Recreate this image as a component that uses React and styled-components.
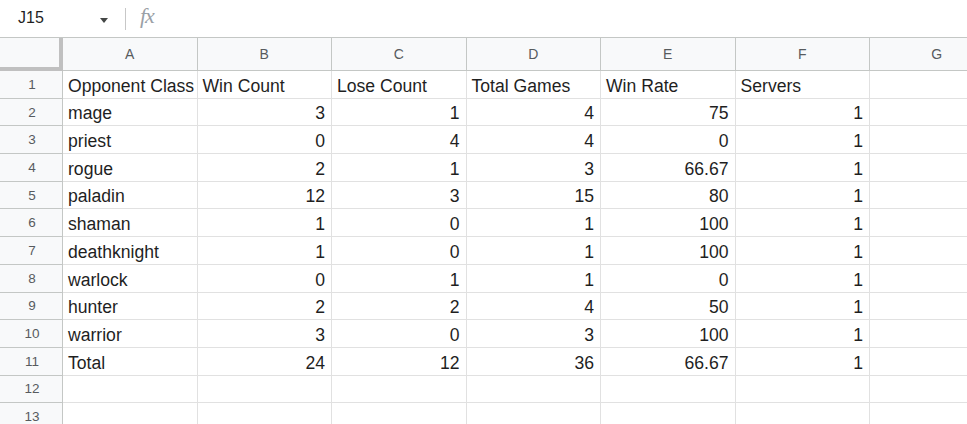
import React from "react";
import styled, { createGlobalStyle } from "styled-components";

const GlobalStyle = createGlobalStyle`
    html, body {
        margin: 0;
        padding: 0;
        background: #fff;
        overflow: hidden;
    }
    body {
        font-family: "Liberation Sans", Arial, sans-serif;
    }
`;

const COL_W = 134.5;
const ROW_H = 27.7;
const HEAD_W = 63;

const Sheet = styled.div`
    width: 967px;
    height: 424px;
    overflow: hidden;
    background: #fff;
`;

const FormulaBar = styled.div`
    height: 37px;
    display: flex;
    align-items: center;
    border-bottom: 1px solid #c4c7c5;
`;

const NameBox = styled.div`
    width: 90px;
    padding-left: 18px;
    box-sizing: border-box;
    font-size: 16px;
    color: #1f1f1f;
    margin-top: -2px;
`;

const Caret = styled.div`
    width: 0;
    height: 0;
    border-left: 4.5px solid transparent;
    border-right: 4.5px solid transparent;
    border-top: 5px solid #444746;
    margin-left: 10px;
    margin-top: 3px;
`;

const Divider = styled.div`
    width: 1px;
    height: 22px;
    background: #c7c7c7;
    margin-left: 17px;
    margin-right: 14px;
`;

const Fx = styled.span`
    font-family: "Liberation Serif", "Times New Roman", serif;
    font-style: italic;
    font-size: 22px;
    color: #9aa0a6;
    margin-top: -5px;
    letter-spacing: -1px;
`;

const Row = styled.div`
    display: flex;
    height: ${(p) => (p.$head ? 33 : ROW_H)}px;
`;

const Corner = styled.div`
    width: ${HEAD_W}px;
    flex: none;
    box-sizing: border-box;
    background: #f8f9fa;
    border-right: 4px solid #c0c0c0;
    border-bottom: 4px solid #c0c0c0;
`;

const ColHead = styled.div`
    width: ${COL_W}px;
    flex: none;
    box-sizing: border-box;
    background: #f8f9fa;
    border-right: 1px solid #c4c7c5;
    border-bottom: 1px solid #c4c7c5;
    display: flex;
    align-items: center;
    justify-content: center;
    font-size: 14px;
    color: #575b5e;
`;

const RowHead = styled.div`
    width: ${HEAD_W}px;
    flex: none;
    box-sizing: border-box;
    background: #f8f9fa;
    border-right: 1px solid #c4c7c5;
    border-bottom: 1px solid #c4c7c5;
    display: flex;
    align-items: center;
    justify-content: center;
    font-size: 13.5px;
    color: #575b5e;
    padding-left: 2px;
`;

const Cell = styled.div`
    width: ${COL_W}px;
    flex: none;
    box-sizing: border-box;
    border-right: 1px solid #e1e1e1;
    border-bottom: 1px solid #e1e1e1;
    display: flex;
    align-items: flex-end;
    justify-content: ${(p) => (p.$num ? "flex-end" : "flex-start")};
    padding: 0 6px 1px 5px;
    font-size: 17.6px;
    color: #1f1f1f;
    white-space: nowrap;
    overflow: visible;
`;

const columns = ["A", "B", "C", "D", "E", "F", "G"];

const data = [
    ["Opponent Class", "Win Count", "Lose Count", "Total Games", "Win Rate", "Servers"],
    ["mage", 3, 1, 4, 75, 1],
    ["priest", 0, 4, 4, 0, 1],
    ["rogue", 2, 1, 3, 66.67, 1],
    ["paladin", 12, 3, 15, 80, 1],
    ["shaman", 1, 0, 1, 100, 1],
    ["deathknight", 1, 0, 1, 100, 1],
    ["warlock", 0, 1, 1, 0, 1],
    ["hunter", 2, 2, 4, 50, 1],
    ["warrior", 3, 0, 3, 100, 1],
    ["Total", 24, 12, 36, 66.67, 1],
    [],
    [],
];

const App = () => {
    return (
        <Sheet>
            <GlobalStyle />
            <FormulaBar>
                <NameBox>J15</NameBox>
                <Caret />
                <Divider />
                <Fx>fx</Fx>
            </FormulaBar>
            <Row $head>
                <Corner />
                {columns.map((c) => (
                    <ColHead key={c}>{c}</ColHead>
                ))}
            </Row>
            {data.map((r, i) => (
                <Row key={i}>
                    <RowHead>{i + 1}</RowHead>
                    {columns.map((c, j) => {
                        const v = r[j];
                        return (
                            <Cell key={c} $num={typeof v === "number"}>
                                {v}
                            </Cell>
                        );
                    })}
                </Row>
            ))}
        </Sheet>
    );
};

export default App;
